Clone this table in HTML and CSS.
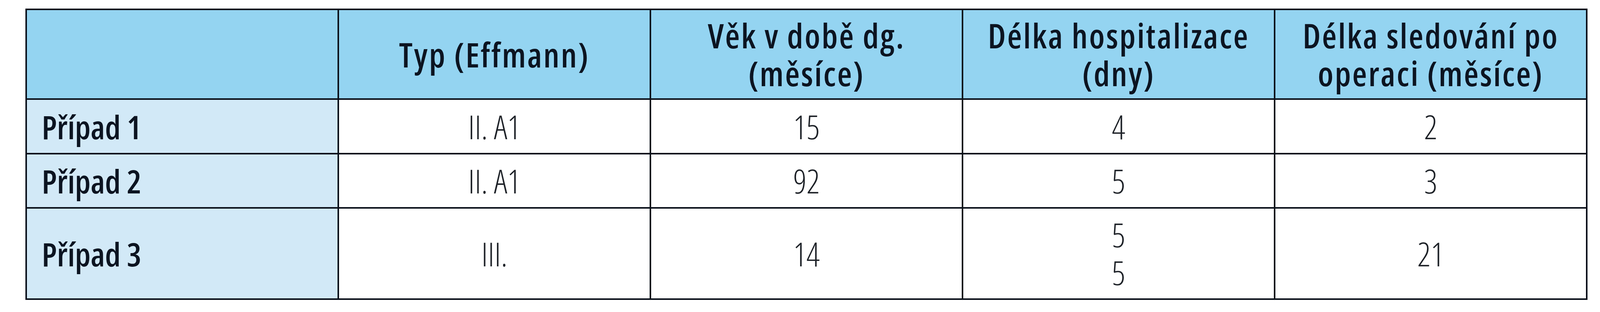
FILE: index.html
```html
<!DOCTYPE html>
<html lang="cs">
<head>
<meta charset="utf-8">
<title>Případy</title>
<link rel="stylesheet" href="styles.css">
</head>
<body>
<div class="page">
  <table class="cases">
    <colgroup>
      <col class="c"><col class="c"><col class="c"><col class="c"><col class="c">
    </colgroup>
    <thead>
      <tr class="head">
        <th class="corner"></th>
        <th>Typ (Effmann)</th>
        <th>Věk v době dg.<br>(měsíce)</th>
        <th>Délka hospitalizace<br>(dny)</th>
        <th>Délka sledování po<br>operaci (měsíce)</th>
      </tr>
    </thead>
    <tbody>
      <tr class="r1">
        <th class="case">Případ 1</th>
        <td>II. A1</td>
        <td>15</td>
        <td>4</td>
        <td>2</td>
      </tr>
      <tr class="r2">
        <th class="case">Případ 2</th>
        <td>II. A1</td>
        <td>92</td>
        <td>5</td>
        <td>3</td>
      </tr>
      <tr class="r3">
        <th class="case">Případ 3</th>
        <td>III.</td>
        <td>14</td>
        <td>5<br>5</td>
        <td>21</td>
      </tr>
    </tbody>
  </table>
</div>
</body>
</html>
```

FILE: styles.css
```css
html, body {
  margin: 0;
  padding: 0;
  background: #ffffff;
  overflow: hidden;
}

/* 4339 x 800 frame: 1vw = 43.39px, 1vh = 8px */
.page {
  padding: 2.75vh 0 0 1.59vw;
}

.cases {
  width: 97.63vw;
  table-layout: fixed;
  border-collapse: separate;
  border-spacing: 0;
  border-top: 0.5vh solid #0b111b;
  border-left: 0.5vh solid #0b111b;
  font-family: "Open Sans", "Noto Sans", "DejaVu Sans", sans-serif;
  font-stretch: 75%;
  font-size: 10.5vh;
  line-height: 12.125vh;
  color: #141a24;
}

.cases col.c {
  width: 20%;
}

.cases th,
.cases td {
  padding: 0;
  border-right: 0.5vh solid #0b111b;
  border-bottom: 0.5vh solid #0b111b;
  vertical-align: middle;
  text-align: center;
  white-space: nowrap;
}

.cases thead th {
  background: #94d4f1;
  font-weight: 600;
  font-size: 10.8vh;
  letter-spacing: 0.04em;
  color: #0c1421;
}

.cases tr.head { height: 28.75vh; }
.cases tr.r1 { height: 17.5vh; }
.cases tr.r2 { height: 17.375vh; }
.cases tr.r3 { height: 29.25vh; }

.cases th.case {
  background: #d2e9f7;
  text-align: left;
  padding-left: 0.92vw;
  font-weight: 600;
  color: #0c1421;
}

.cases td {
  background: #ffffff;
  font-weight: 300;
  color: #1e2228;
}
```
